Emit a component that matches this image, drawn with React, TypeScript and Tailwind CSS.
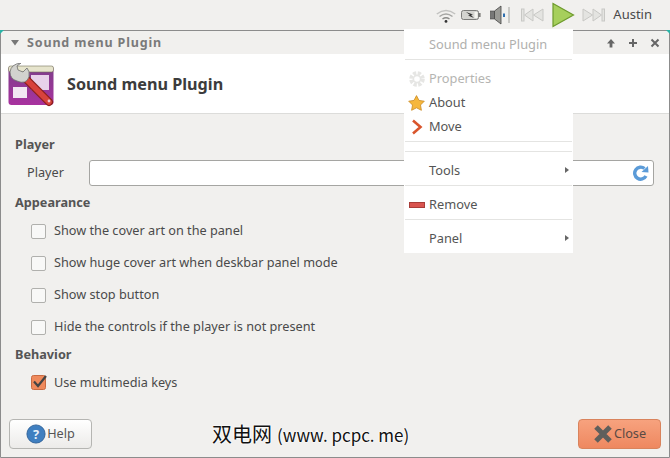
import React from 'react';

const font = { fontFamily: '"Noto Sans", sans-serif' };

const TrayIcons = () => (
    <div className="flex items-center">
        {/* wifi */}
        <svg width="20" height="14" viewBox="0 0 20 14" className="mr-[5px] mt-[1px]" fill="none" strokeWidth="1.5">
            <path d="M0.8 5 Q10 -2 19.2 5" stroke="#c2c2c0" />
            <path d="M3.5 7.5 Q10 2.5 16.5 7.5" stroke="#a6a6a4" />
            <path d="M6.5 10 Q10 7.5 13.5 10" stroke="#8a8a88" />
            <circle cx="10" cy="12.4" r="1.4" fill="#333" />
        </svg>
        {/* battery */}
        <svg width="20" height="12" viewBox="0 0 20 12" className="mr-[9px]">
            <rect x="0.5" y="1.5" width="17" height="9" rx="2" fill="#d4d4d0" stroke="#7c7c7a" />
            <rect x="18" y="4" width="1.6" height="4" fill="#7c7c7a" />
            <path d="M5 3 L12 5.5 L10 6 L13 9 L7 6.5 L9 6 Z" fill="#333" />
            <rect x="13.5" y="3" width="3" height="6" fill="#f5f5f0" />
        </svg>
        {/* volume */}
        <svg width="21" height="20" viewBox="0 0 21 20" className="mr-[10px]">
            <rect x="0.5" y="6" width="4" height="8" fill="#777" stroke="#444" strokeWidth="0.6" />
            <path d="M4.5 6 L11 1 V19 L4.5 14 Z" fill="#9a9a96" stroke="#444" strokeWidth="0.8" />
            <rect x="13" y="8.5" width="2" height="3.5" fill="#2f6fb0" />
            <rect x="18" y="2" width="2" height="16" fill="#c9c9c6" />
        </svg>
        {/* prev */}
        <svg width="24" height="16" viewBox="0 0 24 16" className="mr-[7px]" fill="#e4e4e1" stroke="#c8c8c5">
            <rect x="0.5" y="2" width="2.5" height="12" />
            <path d="M12 2 V14 L3.5 8 Z" />
            <path d="M22 2 V14 L12.5 8 Z" />
        </svg>
        {/* play */}
        <svg width="23" height="26" viewBox="0 0 23 26" className="mr-[6px]">
            <path d="M1 1.5 L21.5 13 L1 24.5 Z" fill="#a6cf5c" stroke="#6d9a2c" strokeWidth="1.2" />
        </svg>
        {/* next */}
        <svg width="24" height="16" viewBox="0 0 24 16" className="mr-[8px]" fill="#e4e4e1" stroke="#c8c8c5">
            <path d="M2 2 V14 L11.5 8 Z" />
            <path d="M12 2 V14 L20.5 8 Z" />
            <rect x="21" y="2" width="2.5" height="12" />
        </svg>
    </div>
);

const WindowButtons = () => (
    <div className="flex items-center gap-[12px] mr-[4px]">
        <svg width="10" height="10" viewBox="0 0 10 10" fill="#666">
            <path d="M5 1 L9 5.5 H6.4 V9.5 H3.6 V5.5 H1 Z" />
        </svg>
        <svg width="10" height="10" viewBox="0 0 10 10" fill="#666">
            <path d="M4 1 H6 V4 H9 V6 H6 V9 H4 V6 H1 V4 H4 Z" />
        </svg>
        <svg width="10" height="10" viewBox="0 0 10 10" stroke="#666" strokeWidth="2">
            <path d="M1.5 1.5 L8.5 8.5 M8.5 1.5 L1.5 8.5" />
        </svg>
    </div>
);

const PluginIcon = () => (
    <svg width="46" height="44" viewBox="0 0 46 44" className="mt-[3px]">
        <defs>
            <linearGradient id="plug" x1="0" y1="0" x2="0" y2="1">
                <stop offset="0" stopColor="#7d3f8a" />
                <stop offset="1" stopColor="#a8329f" />
            </linearGradient>
        </defs>
        <rect x="0.5" y="3" width="45" height="39" rx="3" fill="url(#plug)" />
        <rect x="0.5" y="3" width="45" height="6" rx="2" fill="#e6e4cc" stroke="#77735a" strokeWidth="0.6" />
        <rect x="23" y="12" width="18" height="15" fill="#e8d2ea" />
        <rect x="5" y="24" width="14" height="11" fill="#f2e7f2" />
        <path d="M17 15 L41 39" stroke="#8c1f1c" strokeWidth="8" strokeLinecap="round" />
        <path d="M17 15 L41 39" stroke="#d8423c" strokeWidth="5.5" strokeLinecap="round" />
        <path d="M13 0 Q3 1 2 9 Q2 16 9 18 Q18 22 21 14 Q22 8 19 5 L15 9 L10 7 L9 3 Z" fill="#d2d2ce" stroke="#6e6e6e" strokeWidth="0.8" />
        <circle cx="41" cy="38" r="1.4" fill="#f0c8d8" />
    </svg>
);

const Check = ({ label, checked }: { label: string; checked?: boolean }) => (
    <div className="flex items-center h-[32px] pl-[30px]">
        {checked ? (
            <svg width="16" height="16" viewBox="0 0 16 16" className="mr-[7px] shrink-0">
                <rect x="0.5" y="0.5" width="14" height="14" rx="2" fill="#ef8a5c" stroke="#c86a42" />
                <path d="M3 6.5 L7 11 L15 1" fill="none" stroke="#444" strokeWidth="2.2" />
            </svg>
        ) : (
            <span className="w-[15px] h-[15px] mr-[8px] shrink-0 rounded-[2px] border border-[#b0b0ad] bg-[#f8f8f7]" />
        )}
        <span className="text-[12.7px] text-[#4a4a4a]">{label}</span>
    </div>
);

const Heading = ({ children }: { children: string }) => (
    <div className="h-[20px] leading-[20px] pl-[14px] text-[12.7px] font-bold text-[#555]">{children}</div>
);

const MenuRow = ({ label, icon, muted, arrow }: { label: string; icon?: React.ReactNode; muted?: boolean; arrow?: boolean }) => (
    <div className="relative flex items-center h-[24px] shrink-0">
        <span className="w-[25px] flex justify-center">{icon}</span>
        <span className={`text-[12.8px] ${muted ? 'text-[#b5b5b2]' : 'text-[#555]'}`}>{label}</span>
        {arrow && (
            <svg width="4" height="6" viewBox="0 0 4 6" className="absolute right-[4px] top-[8px]" fill="#666">
                <path d="M0 0 L4 3 L0 6 Z" />
            </svg>
        )}
    </div>
);

const MenuSep = () => <div className="h-px shrink-0 bg-[#e4e4e2] mx-[1px]" />;

const PopupMenu = () => (
    <div className="absolute left-[404px] top-[29px] w-[169px] h-[224px] bg-white flex flex-col">
        <div className="h-[30px] shrink-0 flex items-center pl-[25px] pt-[2px] text-[12.8px] text-[#b0b0ae]">Sound menu Plugin</div>
        <MenuSep />
        <div className="pt-[7px] pb-[2px]">
            <MenuRow
                label="Properties"
                muted
                icon={
                    <svg width="16" height="16" viewBox="0 0 16 16">
                        <circle cx="8" cy="8" r="5.6" fill="none" stroke="#e6e6e4" strokeWidth="4.4" strokeDasharray="3 1.4" />
                        <circle cx="8" cy="8" r="3.6" fill="none" stroke="#e6e6e4" strokeWidth="1.6" />
                    </svg>
                }
            />
            <MenuRow
                label="About"
                icon={
                    <svg width="17" height="16" viewBox="0 0 17 16">
                        <path d="M8.5 0.6 L11 5.4 L16.3 6.2 L12.5 10 L13.4 15.3 L8.5 12.8 L3.6 15.3 L4.5 10 L0.7 6.2 L6 5.4 Z" fill="#f6b73c" stroke="#c98a22" strokeWidth="0.8" />
                    </svg>
                }
            />
            <MenuRow
                label="Move"
                icon={
                    <svg width="12" height="16" viewBox="0 0 12 16" fill="none" stroke="#d9552c" strokeWidth="2.6">
                        <path d="M2 1.5 L9.5 8 L2 14.5" />
                    </svg>
                }
            />
        </div>
        <MenuSep />
        <div className="h-[9px] shrink-0" />
        <MenuSep />
        <div className="pt-[7px] pb-[2px]"><MenuRow label="Tools" arrow /></div>
        <MenuSep />
        <div className="pt-[7px] pb-[2px]">
            <MenuRow
                label="Remove"
                icon={<span className="block w-[16px] h-[6px] bg-[#d9544f] border border-[#a83c38]" />}
            />
        </div>
        <MenuSep />
        <div className="pt-[7px] pb-[2px]"><MenuRow label="Panel" arrow /></div>
    </div>
);

export default function App() {
    return (
        <div className="relative w-[670px] h-[458px] overflow-hidden bg-[#f1f0ee]" style={font}>
            <div className="h-[30px] flex items-center justify-end pr-[18px]">
                <TrayIcons />
                <span className="text-[13px] text-[#4a4a4a]">Austin</span>
            </div>

            <div className="h-[428px] flex flex-col border border-[#8c8c8c] rounded-t-[2px]">
                <div className="h-[23px] shrink-0 flex items-center justify-between pl-[9px] pr-[5px]">
                    <div className="flex items-center">
                        <svg width="10" height="6" viewBox="0 0 10 6" className="mr-[7px]" fill="#777">
                            <path d="M1 0 H9 L5 5.5 Z" />
                        </svg>
                        <span className="mt-[2px] text-[12.5px] font-bold tracking-[0.85px] text-[#7a7a7a]">Sound menu Plugin</span>
                    </div>
                    <WindowButtons />
                </div>

                <div className="h-[60px] shrink-0 flex items-center bg-white border-b border-[#dcdcda] pl-[7px]">
                    <PluginIcon />
                    <span className="ml-[13px] mt-[1px] text-[16.2px] font-bold text-[#3c3c3c]">Sound menu Plugin</span>
                </div>

                <div className="flex-1 flex flex-col pt-[20px]">
                    <Heading>Player</Heading>
                    <div className="flex items-center h-[38px] pl-[26px] pr-[15px]">
                        <span className="w-[62px] text-[12.7px] text-[#4a4a4a]">Player</span>
                        <div className="flex-1 h-[26px] flex items-center justify-end pr-[4px] bg-white border border-[#a5a5a2] rounded-[3px]">
                            <svg width="16" height="16" viewBox="0 0 16 16" fill="none">
                                <path d="M13 11 A6 6 0 1 1 11.5 3.5" stroke="#5b9bd8" strokeWidth="3.4" />
                                <path d="M8.5 7 L15.5 7.5 L15 1 Z" fill="#5b9bd8" />
                            </svg>
                        </div>
                    </div>
                    <Heading>Appearance</Heading>
                    <div className="pt-[3px]">
                        <Check label="Show the cover art on the panel" />
                        <Check label="Show huge cover art when deskbar panel mode" />
                        <Check label="Show stop button" />
                        <Check label="Hide the controls if the player is not present" />
                    </div>
                    <div className="pt-[1px]"><Heading>Behavior</Heading></div>
                    <div className="pt-[3px]"><Check label="Use multimedia keys" checked /></div>

                    <div className="mt-auto flex items-center justify-between px-[8px] pb-[8px]">
                        <button className="w-[83px] h-[30px] flex items-center justify-center gap-[1px] rounded-[4px] border border-[#b5b5b2] bg-gradient-to-b from-white to-[#ecebe9] text-[12.7px] text-[#555]">
                            <svg width="20" height="20" viewBox="0 0 22 22">
                                <circle cx="11" cy="11" r="10" fill="#3f7fc0" stroke="#2c5f96" />
                                <text x="11" y="16" textAnchor="middle" fontSize="14" fontWeight="bold" fill="#e8f1fa">?</text>
                            </svg>
                            Help
                        </button>
                        <button className="w-[83px] h-[30px] flex items-center justify-center gap-[1px] rounded-[4px] border border-[#d9835c] bg-gradient-to-b from-[#f7a27e] to-[#ee8860] text-[12.7px] text-[#5a4a44]">
                            <svg width="20" height="20" viewBox="0 0 20 20" stroke="#5f5f5c" strokeWidth="5">
                                <path d="M3 3 L17 17 M17 3 L3 17" />
                            </svg>
                            Close
                        </button>
                    </div>
                </div>
            </div>

            <span className="absolute left-0 top-[30px] w-0 h-0 border-t-[4px] border-r-[4px] border-t-[#2ab5a8] border-r-transparent" />
            <span className="absolute right-0 top-[30px] w-0 h-0 border-t-[4px] border-l-[4px] border-t-[#2ab5a8] border-l-transparent" />

            <PopupMenu />

            <div
                className="absolute left-[212px] top-[420px] text-[20px] leading-[28px] text-[#111] whitespace-nowrap [text-shadow:0_0_2px_#fff,0_0_2px_#fff,0_0_2px_#fff]"
                style={{ fontFamily: '"Noto Sans CJK SC", sans-serif' }}
            >
                双电网<span className="ml-[5px] text-[17px]">(www. pcpc. me)</span>
            </div>
        </div>
    );
}
